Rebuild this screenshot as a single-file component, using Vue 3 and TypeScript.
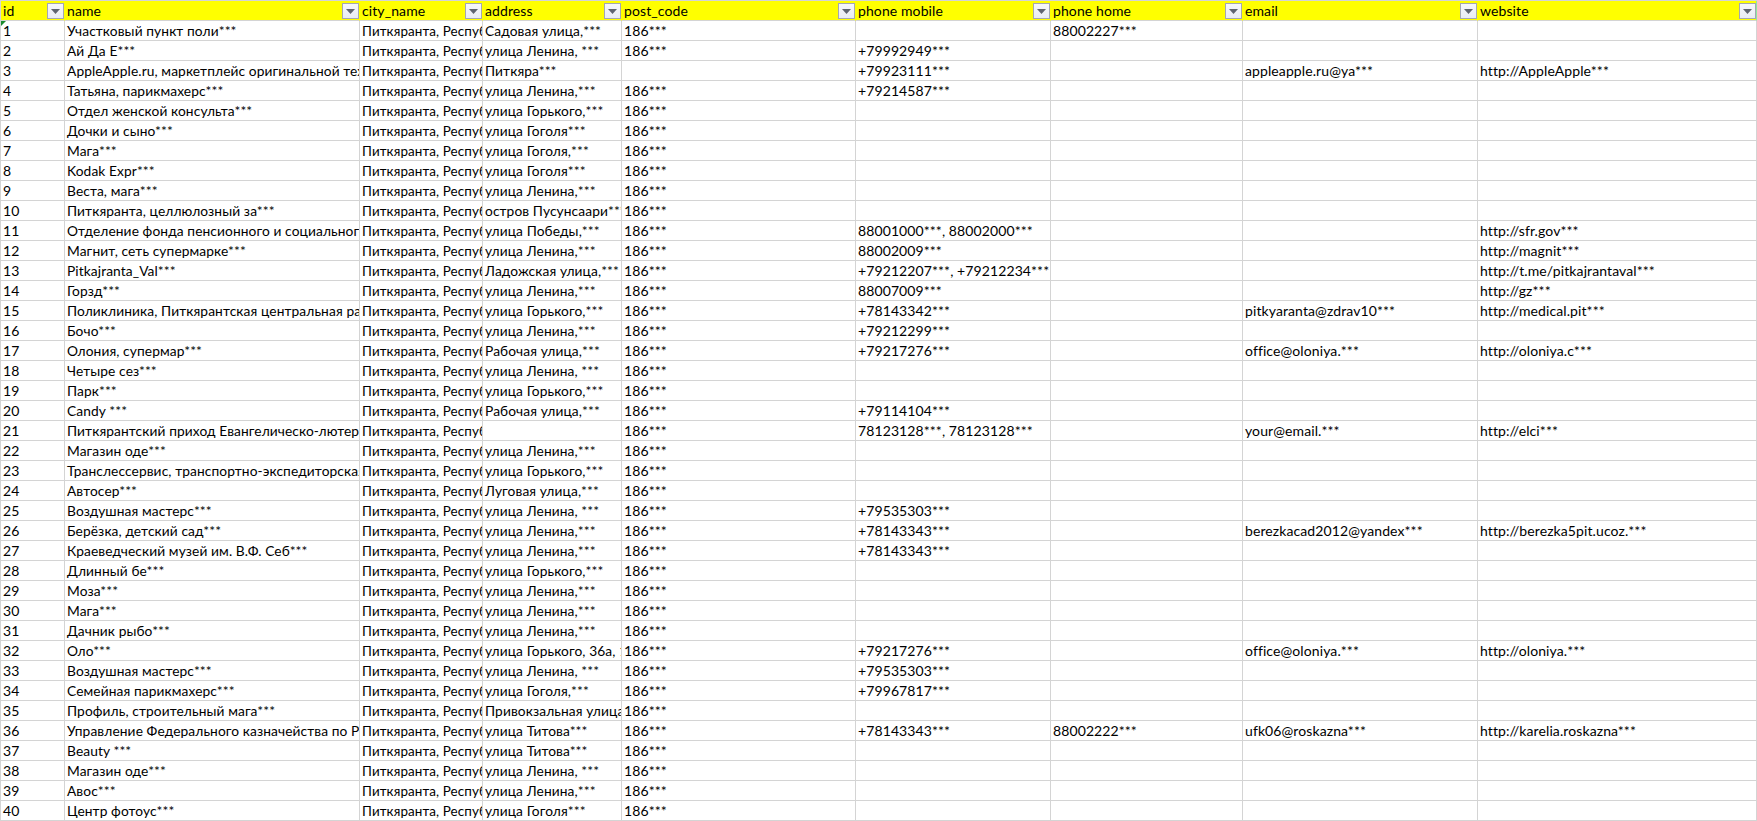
<script setup lang="ts">
interface Column { key: string; label: string; width: number }

const columns: Column[] = [
  { key: 'id', label: 'id', width: 64 },
  { key: 'name', label: 'name', width: 295 },
  { key: 'city', label: 'city_name', width: 123 },
  { key: 'address', label: 'address', width: 139 },
  { key: 'post', label: 'post_code', width: 234 },
  { key: 'mobile', label: 'phone mobile', width: 195 },
  { key: 'home', label: 'phone home', width: 192 },
  { key: 'email', label: 'email', width: 235 },
  { key: 'website', label: 'website', width: 279 },
]

const city = 'Питкяранта, Республика Карелия'

// name, address, post code, mobile, home, email, website
type Row = [string, string, string, string?, string?, string?, string?]

const source: Row[] = [
  ['Участковый пункт поли***', 'Садовая улица,***', '186***', '', '88002227***'],
  ['Ай Да Е***', 'улица Ленина, ***', '186***', '+79992949***'],
  ['AppleApple.ru, маркетплейс оригинальной техники', 'Питкяра***', '', '+79923111***', '', 'appleapple.ru@ya***', 'http://AppleApple***'],
  ['Татьяна, парикмахерс***', 'улица Ленина,***', '186***', '+79214587***'],
  ['Отдел женской консульта***', 'улица Горького,***', '186***'],
  ['Дочки и сыно***', 'улица Гоголя***', '186***'],
  ['Мага***', 'улица Гоголя,***', '186***'],
  ['Kodak Expr***', 'улица Гоголя***', '186***'],
  ['Веста, мага***', 'улица Ленина,***', '186***'],
  ['Питкяранта, целлюлозный за***', 'остров Пусунсаари***', '186***'],
  ['Отделение фонда пенсионного и социального страхования', 'улица Победы,***', '186***', '88001000***, 88002000***', '', '', 'http://sfr.gov***'],
  ['Магнит, сеть супермарке***', 'улица Ленина,***', '186***', '88002009***', '', '', 'http://magnit***'],
  ['Pitkajranta_Val***', 'Ладожская улица,***', '186***', '+79212207***, +79212234***', '', '', 'http://t.me/pitkajrantaval***'],
  ['Горзд***', 'улица Ленина,***', '186***', '88007009***', '', '', 'http://gz***'],
  ['Поликлиника, Питкярантская центральная районная', 'улица Горького,***', '186***', '+78143342***', '', 'pitkyaranta@zdrav10***', 'http://medical.pit***'],
  ['Бочо***', 'улица Ленина,***', '186***', '+79212299***'],
  ['Олония, супермар***', 'Рабочая улица,***', '186***', '+79217276***', '', 'office@oloniya.***', 'http://oloniya.c***'],
  ['Четыре сез***', 'улица Ленина, ***', '186***'],
  ['Парк***', 'улица Горького,***', '186***'],
  ['Candy ***', 'Рабочая улица,***', '186***', '+79114104***'],
  ['Питкярантский приход Евангелическо-лютеранской', '', '186***', '78123128***, 78123128***', '', 'your@email.***', 'http://elci***'],
  ['Магазин оде***', 'улица Ленина,***', '186***'],
  ['Транслессервис, транспортно-экспедиторская компания', 'улица Горького,***', '186***'],
  ['Автосер***', 'Луговая улица,***', '186***'],
  ['Воздушная мастерс***', 'улица Ленина, ***', '186***', '+79535303***'],
  ['Берёзка, детский сад***', 'улица Ленина,***', '186***', '+78143343***', '', 'berezkacad2012@yandex***', 'http://berezka5pit.ucoz.***'],
  ['Краеведческий музей им. В.Ф. Себ***', 'улица Ленина,***', '186***', '+78143343***'],
  ['Длинный бе***', 'улица Горького,***', '186***'],
  ['Моза***', 'улица Ленина,***', '186***'],
  ['Мага***', 'улица Ленина,***', '186***'],
  ['Дачник рыбо***', 'улица Ленина,***', '186***'],
  ['Оло***', 'улица Горького, 36а, 1***', '186***', '+79217276***', '', 'office@oloniya.***', 'http://oloniya.***'],
  ['Воздушная мастерс***', 'улица Ленина, ***', '186***', '+79535303***'],
  ['Семейная парикмахерс***', 'улица Гоголя,***', '186***', '+79967817***'],
  ['Профиль, строительный мага***', 'Привокзальная улица,***', '186***'],
  ['Управление Федерального казначейства по Республике', 'улица Титова***', '186***', '+78143343***', '88002222***', 'ufk06@roskazna***', 'http://karelia.roskazna***'],
  ['Beauty ***', 'улица Титова***', '186***'],
  ['Магазин оде***', 'улица Ленина, ***', '186***'],
  ['Авос***', 'улица Ленина,***', '186***'],
  ['Центр фотоус***', 'улица Гоголя***', '186***'],
]

const rows: string[][] = source.map((r, i) => [
  String(i + 1), r[0], city, r[1], r[2], r[3] ?? '', r[4] ?? '', r[5] ?? '', r[6] ?? '',
])

// Columns 1–3 hold Cyrillic text, which runs a little narrower in the reference.
const cellClass = (j: number): Record<string, boolean> => ({
  cyr: j === 1 || j === 3,
  town: j === 2,
})
</script>

<template>
  <div class="sheet">
    <table class="grid">
      <colgroup>
        <col v-for="c in columns" :key="c.key" :style="{ width: c.width + 'px' }" />
      </colgroup>
      <thead>
        <tr>
          <th v-for="c in columns" :key="c.key">
            <div class="clip">{{ c.label }}</div>
            <span class="filter">
              <svg width="9" height="5" viewBox="0 0 9 5"><path d="M0 0h9L4.5 5z" fill="#5f6470" /></svg>
            </span>
          </th>
        </tr>
      </thead>
      <tbody>
        <tr v-for="(row, i) in rows" :key="i">
          <td v-for="(cell, j) in row" :key="j" :class="cellClass(j)">
            <div class="clip">{{ cell }}</div>
            <span v-if="i === 0 && j === 0" class="flag"></span>
          </td>
        </tr>
      </tbody>
    </table>
  </div>
</template>

<style>
html, body { margin: 0; background: #fff; overflow: hidden; }
</style>

<style scoped>
.sheet {
  width: 1757px;
  height: 821px;
  box-sizing: border-box;
  border-top: 1px solid #d4d4d4;
  border-left: 1px solid #d4d4d4;
  overflow: hidden;
  font-family: "Lato", "Liberation Sans", sans-serif;
  font-size: 14px;
  letter-spacing: 0.1px;
  color: #000;
}
.grid {
  table-layout: fixed;
  border-collapse: separate;
  border-spacing: 0;
  width: 1756px;
}
th, td {
  position: relative;
  box-sizing: border-box;
  height: 20px;
  padding: 0;
  font-weight: 400;
  text-align: left;
  border-right: 1px solid #d4d4d4;
  border-bottom: 1px solid #d4d4d4;
}
td.cyr { font-size: 13.75px; }
td.town { font-size: 13.45px; }
th {
  background: #ffff00;
  border-right-color: #ffff00;
}
th:last-child { border-right-color: #8fe8a0; }
.clip {
  height: 19px;
  line-height: 20px;
  padding-left: 2px;
  white-space: pre;
  overflow: hidden;
}
.filter {
  position: absolute;
  top: 2px;
  right: 0;
  box-sizing: border-box;
  width: 17px;
  height: 16px;
  display: flex;
  align-items: center;
  justify-content: center;
  background: linear-gradient(#f6f7fb, #e9ecf4);
  border: 1px solid #a3a7b2;
}
.flag {
  position: absolute;
  top: 0;
  left: 0;
  width: 0;
  height: 0;
  border-top: 5px solid #1a8a2e;
  border-right: 5px solid transparent;
}
</style>
